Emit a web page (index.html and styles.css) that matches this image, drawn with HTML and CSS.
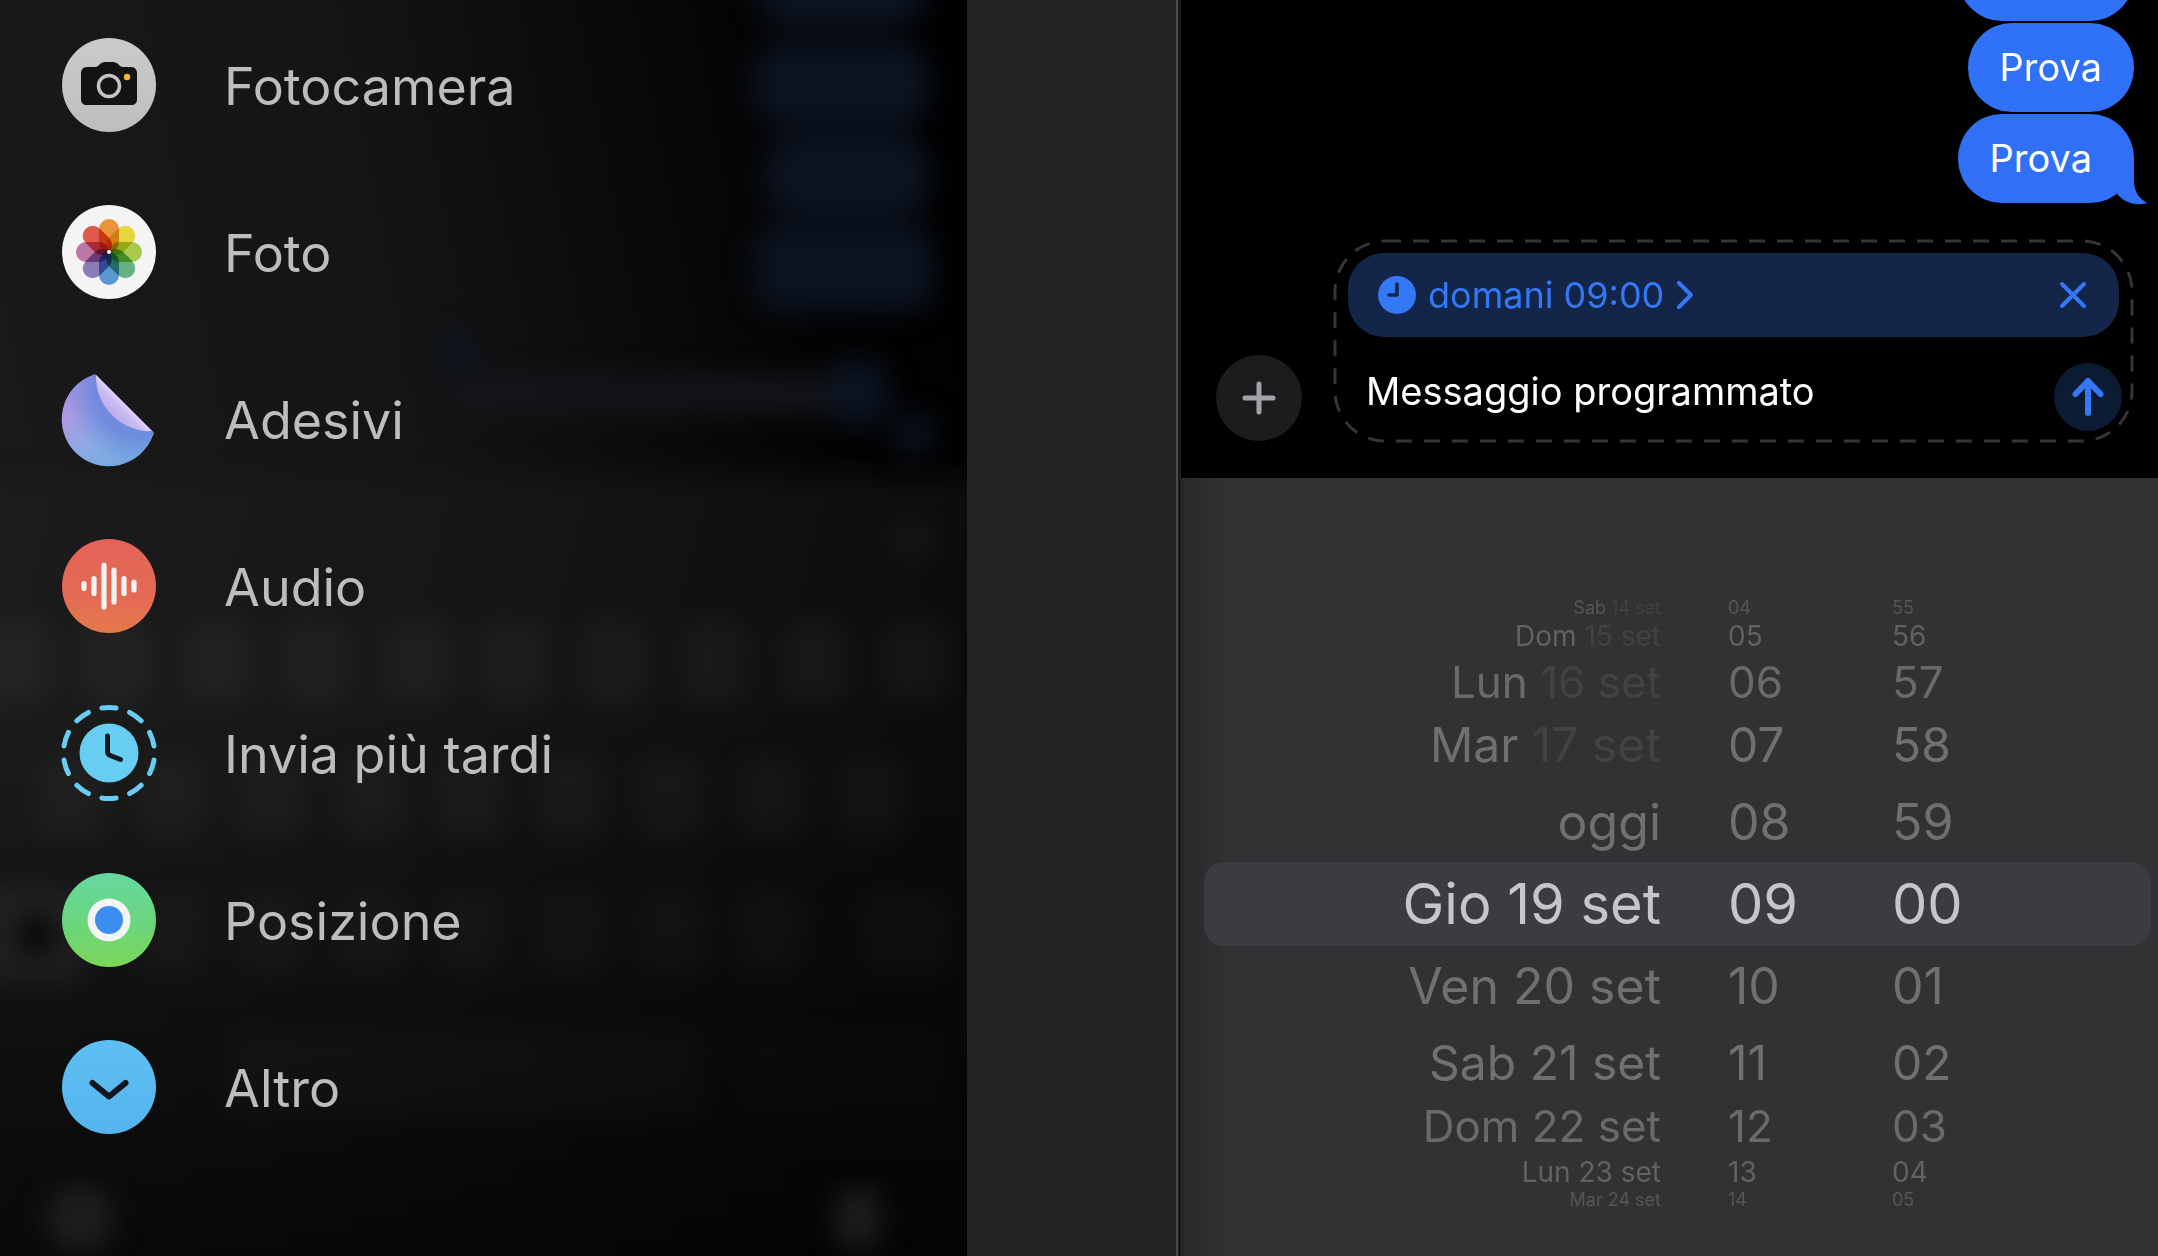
FILE: index.html
```html
<!DOCTYPE html>
<html lang="it">
<head>
  <meta charset="UTF-8" />
  <meta name="viewport" content="width=device-width, initial-scale=1.0" />
  <title>Messaggi</title>
  <link rel="stylesheet" href="styles.css">
</head>
<body>
  <main class="stage">
    <section class="menu-screen">
      <!-- dimmed conversation and keyboard behind the menu -->
      <svg class="backdrop" viewBox="0 0 967 1256" preserveAspectRatio="none" aria-hidden="true">
        <defs>
          <linearGradient id="topBg" x1="0" x2="1" y1="0.25" y2="0">
            <stop offset="0" stop-color="#191919" />
            <stop offset="0.4" stop-color="#141414" />
            <stop offset="0.8" stop-color="#030303" />
            <stop offset="1" stop-color="#000" />
          </linearGradient>
          <linearGradient id="kbBg" x1="0" x2="1" y1="0" y2="0.2">
            <stop offset="0" stop-color="#1c1c1c" />
            <stop offset="0.5" stop-color="#161616" />
            <stop offset="1" stop-color="#0c0c0c" />
          </linearGradient>
          <linearGradient id="edge" x1="0" x2="0" y1="0" y2="1">
            <stop offset="0" stop-color="#000" />
            <stop offset="0.05" stop-color="#fff" />
          </linearGradient>
          <mask id="kbMask">
            <rect y="455" width="967" height="801" fill="url(#edge)" />
          </mask>
          <linearGradient id="fade" x1="0" x2="0" y1="0" y2="1">
            <stop offset="0.3" stop-color="#000" stop-opacity="0" />
            <stop offset="1" stop-color="#000" stop-opacity="0.65" />
          </linearGradient>
          <filter id="soft" x="-10%" y="-10%" width="120%" height="120%" color-interpolation-filters="sRGB">
            <feGaussianBlur stdDeviation="14" />
          </filter>
        </defs>
        <rect width="967" height="1256" fill="url(#topBg)" />
        <rect y="455" width="967" height="801" fill="url(#kbBg)" mask="url(#kbMask)" />
        <g filter="url(#soft)">
          <g fill="#0c1422">
            <rect x="755" y="-50" width="172" height="76" rx="34" />
            <rect x="752" y="42" width="178" height="84" rx="34" />
            <rect x="764" y="134" width="166" height="84" rx="34" />
            <rect x="754" y="226" width="180" height="84" rx="24" />
            <circle cx="456" cy="352" r="20" />
            <circle cx="856" cy="392" r="34" />
            <circle cx="914" cy="434" r="20" />
          </g>
          <rect x="450" y="376" width="380" height="36" rx="10" fill="#14161a" />
          <g fill="#fff" fill-opacity="0.035">
            <rect x="-20" y="620" width="70" height="84" rx="10" />
            <rect x="82" y="620" width="70" height="84" rx="10" />
            <rect x="182" y="620" width="70" height="84" rx="10" />
            <rect x="281" y="620" width="70" height="84" rx="10" />
            <rect x="381" y="620" width="70" height="84" rx="10" />
            <rect x="480" y="620" width="70" height="84" rx="10" />
            <rect x="580" y="620" width="70" height="84" rx="10" />
            <rect x="680" y="620" width="70" height="84" rx="10" />
            <rect x="780" y="620" width="70" height="84" rx="10" />
            <rect x="880" y="620" width="70" height="84" rx="10" />
            <rect x="36" y="756" width="70" height="84" rx="10" />
            <rect x="136" y="756" width="70" height="84" rx="10" />
            <rect x="236" y="756" width="70" height="84" rx="10" />
            <rect x="336" y="756" width="70" height="84" rx="10" />
            <rect x="436" y="756" width="70" height="84" rx="10" />
            <rect x="536" y="756" width="70" height="84" rx="10" />
            <rect x="636" y="756" width="70" height="84" rx="10" />
            <rect x="736" y="756" width="70" height="84" rx="10" />
            <rect x="836" y="756" width="70" height="84" rx="10" />
            <rect x="-20" y="892" width="104" height="88" rx="10" fill-opacity="0.09" />
            <rect x="136" y="892" width="70" height="84" rx="10" />
            <rect x="236" y="892" width="70" height="84" rx="10" />
            <rect x="336" y="892" width="70" height="84" rx="10" />
            <rect x="436" y="892" width="70" height="84" rx="10" />
            <rect x="536" y="892" width="70" height="84" rx="10" />
            <rect x="636" y="892" width="70" height="84" rx="10" />
            <rect x="736" y="892" width="70" height="84" rx="10" />
            <rect x="860" y="892" width="90" height="84" rx="10" />
            <rect x="225" y="1030" width="480" height="90" rx="10" />
            <rect x="740" y="1030" width="210" height="90" rx="10" fill-opacity="0.02" />
            <circle cx="912" cy="540" r="24" />
          </g>
          <circle cx="36" cy="935" r="22" fill="#0a0a0a" />
        </g>
        <rect y="472" width="967" height="784" fill="url(#fade)" />
        <g filter="url(#soft)" fill="#1e1e1e">
          <circle cx="80" cy="1218" r="34" />
          <rect x="836" y="1186" width="44" height="64" rx="20" />
        </g>
      </svg>

      <nav class="menu">
        <button class="menu-item" type="button">
          <svg class="menu-icon" viewBox="0 0 94 94" aria-hidden="true">
            <linearGradient id="gCam" x1="0" x2="0" y1="0" y2="1">
              <stop offset="0" stop-color="#cacbcc" />
              <stop offset="1" stop-color="#bdbec0" />
            </linearGradient>
            <circle cx="47" cy="47" r="47" fill="url(#gCam)" />
            <path d="M25 29h8c2 0 3-1 4-2l1-1c1-1 3-2 5-2h8c2 0 4 1 5 2l1 1c1 1 2 2 4 2h8c4 0 6 3 6 6v26c0 4-2 6-6 6H25c-4 0-6-2-6-6V35c0-3 2-6 6-6z" fill="#131313" />
            <circle cx="47" cy="48" r="10.500" fill="none" stroke="#c4c5c6" stroke-width="3.500" />
            <circle cx="65" cy="39" r="3.200" fill="#f2b92f" />
          </svg>
          <span>Fotocamera</span>
        </button>
        <button class="menu-item" type="button">
          <svg class="menu-icon" viewBox="0 0 94 94" aria-hidden="true">
            <circle cx="47" cy="47" r="47" fill="#f4f4f4" />
            <g class="petals">
              <rect x="37" y="14" width="20" height="33" rx="10" fill="#e8953a" />
              <rect x="37" y="14" width="20" height="33" rx="10" fill="#e4d63c" transform="rotate(45 47 47)" />
              <rect x="37" y="14" width="20" height="33" rx="10" fill="#a9ca4c" transform="rotate(90 47 47)" />
              <rect x="37" y="14" width="20" height="33" rx="10" fill="#66b184" transform="rotate(135 47 47)" />
              <rect x="37" y="14" width="20" height="33" rx="10" fill="#5b97d0" transform="rotate(180 47 47)" />
              <rect x="37" y="14" width="20" height="33" rx="10" fill="#8c7cb8" transform="rotate(225 47 47)" />
              <rect x="37" y="14" width="20" height="33" rx="10" fill="#bd76a6" transform="rotate(270 47 47)" />
              <rect x="37" y="14" width="20" height="33" rx="10" fill="#df5a4c" transform="rotate(315 47 47)" />
            </g>
            <circle cx="47" cy="47" r="2" fill="#fff" />
          </svg>
          <span>Foto</span>
        </button>
        <button class="menu-item" type="button">
          <svg class="menu-icon" viewBox="0 0 94 94" aria-hidden="true">
            <linearGradient id="gStick" x1="0.300" x2="0.550" y1="0" y2="1">
              <stop offset="0" stop-color="#a48be0" />
              <stop offset="0.400" stop-color="#ab9ae2" />
              <stop offset="0.750" stop-color="#8cabe4" />
              <stop offset="1" stop-color="#76aae2" />
            </linearGradient>
            <linearGradient id="gFold" x1="0.550" x2="0.250" y1="0.450" y2="0.750">
              <stop offset="0" stop-color="#f2e0f8" />
              <stop offset="0.400" stop-color="#cdbcf2" />
              <stop offset="1" stop-color="#b7a8ee" />
            </linearGradient>
            <radialGradient id="gShade" cx="0.850" cy="0.200" r="0.800">
              <stop offset="0.600" stop-color="#6486dc" stop-opacity="0.800" />
              <stop offset="1" stop-color="#5a94de" stop-opacity="0" />
            </radialGradient>
            <path d="M31 3c2-1 3 0 4 1l55 55c2 1 2 2 1 4A47 47 0 1 1 31 3z" fill="url(#gStick)" />
            <path d="M31 3c2-1 3 0 4 1l55 55c2 1 2 2 1 4A47 47 0 1 1 31 3z" fill="url(#gShade)" />
            <path d="M34 3l56 56C66 61 33 40 34 3z" fill="url(#gFold)" />
          </svg>
          <span>Adesivi</span>
        </button>
        <button class="menu-item" type="button">
          <svg class="menu-icon" viewBox="0 0 94 94" aria-hidden="true">
            <linearGradient id="gAudio" x1="0" x2="0" y1="0" y2="1">
              <stop offset="0" stop-color="#e46358" />
              <stop offset="0.600" stop-color="#e36a55" />
              <stop offset="1" stop-color="#e5794a" />
            </linearGradient>
            <circle cx="47" cy="47" r="47" fill="url(#gAudio)" />
            <path d="M22 44.500v5M32 39.500v15M42 26v42M52 31v32M62 39.500v15M72 43v8" fill="none" stroke="#f6f2f1" stroke-width="5.200" stroke-linecap="round" />
          </svg>
          <span>Audio</span>
        </button>
        <button class="menu-item" type="button">
          <svg class="menu-icon" viewBox="0 0 94 94" aria-hidden="true">
            <circle cx="47" cy="47" r="45.500" fill="none" stroke="#68cdf2" stroke-width="5" stroke-linecap="round" pathLength="300" stroke-dasharray="15 15" stroke-dashoffset="-7.500" />
            <circle cx="47" cy="47" r="29.500" fill="#68cdf2" />
            <path d="M45.500 30v15c0 3 1 4 4 5l9 3.500" fill="none" stroke="#14191c" stroke-width="5" stroke-linecap="round" />
          </svg>
          <span>Invia più tardi</span>
        </button>
        <button class="menu-item" type="button">
          <svg class="menu-icon" viewBox="0 0 94 94" aria-hidden="true">
            <linearGradient id="gPos" x1="0" x2="0" y1="0" y2="1">
              <stop offset="0" stop-color="#66d8a0" />
              <stop offset="0.500" stop-color="#69d67f" />
              <stop offset="1" stop-color="#7ad657" />
            </linearGradient>
            <circle cx="47" cy="47" r="47" fill="url(#gPos)" />
            <circle cx="47" cy="47" r="21.500" fill="#f3f4f5" />
            <circle cx="47" cy="47" r="14" fill="#3b8df0" />
          </svg>
          <span>Posizione</span>
        </button>
        <button class="menu-item" type="button">
          <svg class="menu-icon" viewBox="0 0 94 94" aria-hidden="true">
            <linearGradient id="gMore" x1="0" x2="0" y1="0" y2="1">
              <stop offset="0" stop-color="#5dbff3" />
              <stop offset="1" stop-color="#55b4ee" />
            </linearGradient>
            <circle cx="47" cy="47" r="47" fill="url(#gMore)" />
            <path d="M30.500 43L47 56.500l16.500-13.500" fill="none" stroke="#10161a" stroke-width="6" stroke-linecap="round" stroke-linejoin="round" />
          </svg>
          <span>Altro</span>
        </button>
      </nav>
    </section>

    <section class="chat-screen">
      <div class="conversation">
        <div class="bubble bubble-cut" aria-hidden="true"></div>
        <p class="bubble">Prova</p>
        <p class="bubble bubble-last">Prova
          <svg class="tail" viewBox="0 0 40 60" aria-hidden="true">
            <path d="M27 16v21c0 11 6 19 14 22-12 3-23 0-30-8L0 30z" fill="#2f70f6" />
          </svg>
        </p>

        <form class="composer">
          <button class="round-btn" type="button" aria-label="Aggiungi">
            <svg viewBox="0 0 86 86" aria-hidden="true">
              <path d="M43 29v28M29 43h28" stroke="#a3a3a7" stroke-width="5" stroke-linecap="round" />
            </svg>
          </button>
          <div class="field">
            <svg class="field-outline" aria-hidden="true">
              <rect width="100%" height="100%" rx="50" />
            </svg>
            <div class="schedule">
              <button class="schedule-time" type="button">
                <svg class="clock" viewBox="0 0 38 38" aria-hidden="true">
                  <circle cx="19" cy="19" r="19" fill="#3478f6" />
                  <path d="M19 8v11h-8" fill="none" stroke="#132548" stroke-width="3.500" stroke-linecap="round" stroke-linejoin="round" />
                </svg>
                <span>domani 09:00</span>
                <svg class="chevron" viewBox="0 0 18 28" aria-hidden="true">
                  <path d="M3 2l12 12L3 26" />
                </svg>
              </button>
              <button class="schedule-close" type="button" aria-label="Rimuovi">
                <svg viewBox="0 0 28 28" aria-hidden="true">
                  <path d="M3 3l22 22M25 3L3 25" />
                </svg>
              </button>
            </div>
            <div class="message-row">
              <input class="message" type="text" value="Messaggio programmato" aria-label="Messaggio">
              <button class="send" type="button" aria-label="Invia">
                <svg viewBox="0 0 68 68" aria-hidden="true">
                  <path d="M34 50V18M21.500 31L34 18l12.500 13" />
                </svg>
              </button>
            </div>
          </div>
        </form>
      </div>

      <div class="picker">
        <div class="selection"></div>
        <ul class="wheel wheel-date">
          <li class="d5">Sab <span class="past">14 set</span></li>
          <li class="d4">Dom <span class="past">15 set</span></li>
          <li class="d3">Lun <span class="past">16 set</span></li>
          <li class="d2">Mar <span class="past">17 set</span></li>
          <li class="d1">oggi</li>
          <li class="d0">Gio 19 set</li>
          <li class="d1">Ven 20 set</li>
          <li class="d2">Sab 21 set</li>
          <li class="d3">Dom 22 set</li>
          <li class="d4">Lun 23 set</li>
          <li class="d5">Mar 24 set</li>
        </ul>
        <ul class="wheel wheel-hours">
          <li class="d5">04</li>
          <li class="d4">05</li>
          <li class="d3">06</li>
          <li class="d2">07</li>
          <li class="d1">08</li>
          <li class="d0">09</li>
          <li class="d1">10</li>
          <li class="d2">11</li>
          <li class="d3">12</li>
          <li class="d4">13</li>
          <li class="d5">14</li>
        </ul>
        <ul class="wheel wheel-minutes">
          <li class="d5">55</li>
          <li class="d4">56</li>
          <li class="d3">57</li>
          <li class="d2">58</li>
          <li class="d1">59</li>
          <li class="d0">00</li>
          <li class="d1">01</li>
          <li class="d2">02</li>
          <li class="d3">03</li>
          <li class="d4">04</li>
          <li class="d5">05</li>
        </ul>
      </div>
    </section>
  </main>
</body>
</html>
```
FILE: styles.css
```css
* {
  box-sizing: border-box;
}

body {
  margin: 0;
  background: #242424;
  font-family: Inter, Roboto, "Liberation Sans", sans-serif;
}

button {
  border: none;
  background: none;
  padding: 0;
  font: inherit;
  color: inherit;
  cursor: pointer;
}

svg {
  display: block;
}

.stage {
  display: grid;
  grid-template-columns: 967fr 982fr;
  column-gap: 209px;
  min-height: 100vh;
  overflow: hidden;
}

/* left: attachments menu */
.menu-screen {
  position: relative;
  background: #0c0c0c;
}

.backdrop {
  position: absolute;
  inset: 0;
  width: 100%;
  height: 100%;
}

.menu {
  position: relative;
  display: flex;
  flex-direction: column;
  gap: 73px;
  padding: 38px 62px;
}

.menu-item {
  display: flex;
  align-items: center;
  gap: 68px;
  color: #bdbdbd;
  font-size: 52px;
  line-height: 64px;
  text-align: left;
}

.menu-item span {
  padding-top: 4px;
}

.menu-icon {
  width: 94px;
  height: 94px;
  flex: none;
  overflow: visible;
}

.petals {
  isolation: isolate;
}

.petals rect {
  mix-blend-mode: multiply;
}

/* right: conversation */
.chat-screen {
  display: flex;
  flex-direction: column;
  padding-left: 3px;
  border-left: 2px solid #4a4a4a;
  background: #1a1a1a;
}

.conversation {
  display: flex;
  flex-direction: column;
  justify-content: flex-end;
  align-items: flex-end;
  gap: 2px;
  height: 478px;
  padding: 0 24px 37px 35px;
  background: #000;
  overflow: hidden;
}

.bubble {
  flex: none;
  margin: 0;
  padding: 20px 32px 21px;
  border-radius: 44px;
  background: #3072f7;
  color: #fff;
  font-size: 38px;
  line-height: 48px;
}

.bubble-cut {
  width: 176px;
  height: 89px;
}

.bubble-last {
  position: relative;
  padding-right: 42px;
  background: #2f70f6;
}

.tail {
  position: absolute;
  right: -13px;
  bottom: -1px;
  width: 40px;
  height: 60px;
  overflow: visible;
}

.composer {
  display: flex;
  align-items: flex-end;
  align-self: stretch;
  gap: 33px;
  margin-top: 36px;
  padding-right: 2px;
}

.round-btn {
  width: 86px;
  height: 86px;
  border-radius: 50%;
  background: #1c1c1e;
  flex: none;
}

.field {
  position: relative;
  display: flex;
  flex: 1;
  flex-direction: column;
  gap: 26px;
  min-width: 0;
  padding: 12px 13px 10px;
}

.field-outline {
  position: absolute;
  inset: 0;
  width: 100%;
  height: 100%;
  overflow: visible;
  pointer-events: none;
}

.field-outline rect {
  fill: none;
  stroke: #353537;
  stroke-width: 3px;
  stroke-dasharray: 16px 12px;
}

.schedule {
  display: flex;
  align-items: center;
  justify-content: space-between;
  height: 84px;
  padding: 0 32px 0 30px;
  border-radius: 36px;
  background: #132548;
  color: #3478f6;
}

.schedule-time {
  display: flex;
  align-items: center;
  gap: 12px;
  font-size: 36px;
  line-height: 44px;
}

.clock {
  width: 38px;
  height: 38px;
}

.chevron {
  width: 18px;
  height: 28px;
}

.schedule-close svg {
  width: 28px;
  height: 28px;
}

.chevron path,
.schedule-close path {
  fill: none;
  stroke: #3478f6;
  stroke-width: 4px;
  stroke-linecap: round;
  stroke-linejoin: round;
}

.message-row {
  display: flex;
  align-items: center;
  padding-left: 18px;
}

.message {
  flex: 1;
  min-width: 0;
  height: 68px;
  padding: 0 0 12px;
  border: none;
  outline: none;
  background: none;
  color: #fff;
  font: inherit;
  font-size: 38px;
}

.send {
  width: 68px;
  height: 68px;
  margin-right: -3px;
  border-radius: 50%;
  background: #0a1b33;
}

.send path {
  fill: none;
  stroke: #3478f6;
  stroke-width: 6px;
  stroke-linecap: round;
  stroke-linejoin: round;
}

/* date and time wheels */
.picker {
  position: relative;
  display: grid;
  grid-template-columns: 480fr 67fr 98fr 66fr 266fr;
  align-content: center;
  flex: 1;
  padding-top: 74px;
  background: linear-gradient(90deg, #29292b, #323234 50px);
}

.selection {
  position: absolute;
  top: 384px;
  left: 23px;
  right: 7px;
  height: 84px;
  border-radius: 20px;
  background: #3c3b40;
}

.wheel {
  position: relative;
  margin: 0;
  padding: 0;
  list-style: none;
  color: #707072;
  white-space: nowrap;
}

.wheel-date {
  grid-column: 1;
  text-align: right;
}

.wheel-hours {
  grid-column: 3;
}

.wheel-minutes {
  grid-column: 5;
}

.wheel .d0 {
  color: #c6c6c8;
  font-size: 56px;
  line-height: 84px;
}

.wheel .d1 {
  font-size: 50px;
  line-height: 80px;
}

.wheel .d2 {
  font-size: 48px;
  line-height: 74px;
}

.wheel .d3 {
  font-size: 44px;
  line-height: 52px;
  color: #6a6a6c;
}

.wheel .d4 {
  font-size: 28px;
  line-height: 40px;
  color: #626264;
}

.wheel .d5 {
  font-size: 18px;
  line-height: 16px;
  color: #565658;
}

.wheel .past {
  color: #424244;
}
```
